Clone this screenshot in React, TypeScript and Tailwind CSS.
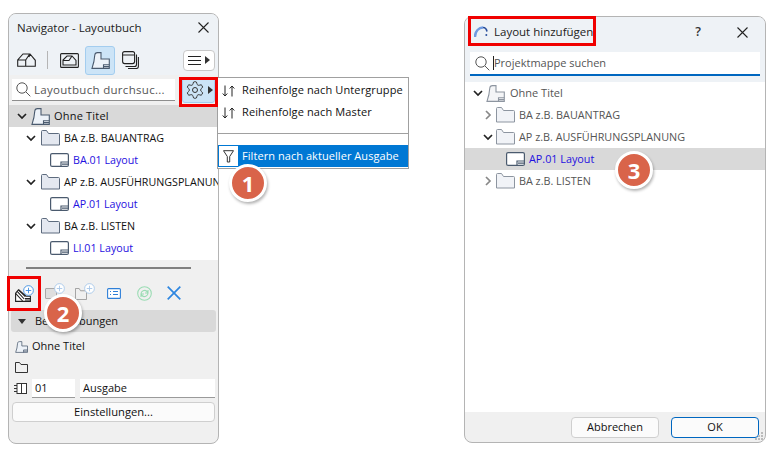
import React from "react";

const S = "#4a5a6e";

const Chevron = ({ open = true, color = "#222" }: { open?: boolean; color?: string }) => (
  <svg width="10" height="10" viewBox="0 0 10 10" fill="none" stroke={color} strokeWidth="1.7" className="shrink-0">
    {open ? <path d="M1 3l4 4 4-4" /> : <path d="M3 1l4 4-4 4" />}
  </svg>
);

const Folder = ({ light = false }: { light?: boolean }) => (
  <svg width="19" height="16" viewBox="0 0 19 16" fill={light ? "#f1f3f7" : "#e4e8f0"} stroke={light ? "#8d95a0" : "#5d6b7e"} strokeWidth="1" className="shrink-0">
    <path d="M.5 15V1.5a1 1 0 0 1 1-1h4l2 3h10a1 1 0 0 1 1 1V15z" />
  </svg>
);

const LayoutIcon = () => (
  <svg width="19" height="14" viewBox="0 0 19 14" fill="#fff" stroke={S} strokeWidth="1.2" className="shrink-0">
    <rect x=".6" y=".6" width="17.8" height="12.8" rx="1.5" />
    <path d="M11 13.4V9h7.4M12 11.2h6" fill="none" />
  </svg>
);

const BookIcon = ({ light = false, w = 19, h = 17 }: { light?: boolean; w?: number; h?: number }) => (
  <svg width={w} height={h} viewBox="0 0 19 17" fill="none" stroke={light ? "#8d95a0" : S} strokeWidth="1.1" className="shrink-0">
    <path d="M1 16.4C2.5 12 3.5 8 3.8 3 3.9 1.5 5 .6 6.5.6H10v6.4h8.3v9.4z" fill={light ? "#f4f5f7" : "#edf2f8"} />
    <path d="M12.5 16.4v-3.6h5.8M13 14.6h5" />
  </svg>
);

const House = () => (
  <svg width="19" height="14" viewBox="0 0 19 14" fill="none" stroke="#222" strokeWidth="1.1">
    <path d="M.7 13.3V7L6 1h7l5.3 6.3v6zM.7 7h8l4-6M8.7 7v6.3M13 1l-1 3" />
  </svg>
);

const HouseFrame = () => (
  <svg width="19" height="15" viewBox="0 0 19 15" fill="none" stroke="#222" strokeWidth="1.1">
    <rect x=".6" y=".6" width="17.8" height="13.8" rx="1" />
    <path d="M3 12V7l4-4h5l4 4.5V12zM3 7.5h6l3-4.5" />
  </svg>
);

const Stack = () => (
  <svg width="17" height="18" viewBox="0 0 17 18" fill="none" stroke="#222" strokeWidth="1.1">
    <rect x=".6" y=".6" width="12" height="12" rx="2" />
    <path d="M.6 4h12M14.5 3.5v10a2 2 0 0 1-2 2h-9M16.4 6v9.5a2 2 0 0 1-2 2H6" />
  </svg>
);

const Search = () => (
  <svg width="15" height="15" viewBox="0 0 15 15" fill="none" stroke="#555" strokeWidth="1" className="shrink-0">
    <circle cx="6" cy="6" r="5.2" />
    <path d="M10 10l4.3 4.3" />
  </svg>
);

const Close = () => (
  <svg width="11" height="11" viewBox="0 0 11 11" stroke="#222" strokeWidth="1.1">
    <path d="M.5.5l10 10M10.5.5l-10 10" />
  </svg>
);

const Gear = () => (
  <svg width="20" height="20" viewBox="0 0 24 24" fill="none" stroke="#333" strokeWidth="1.2" className="shrink-0">
    <path d="M12.22 2h-.44a2 2 0 0 0-2 2v.18a2 2 0 0 1-1 1.73l-.43.25a2 2 0 0 1-2 0l-.15-.08a2 2 0 0 0-2.73.73l-.22.38a2 2 0 0 0 .73 2.73l.15.1a2 2 0 0 1 1 1.72v.51a2 2 0 0 1-1 1.74l-.15.09a2 2 0 0 0-.73 2.73l.22.38a2 2 0 0 0 2.73.73l.15-.08a2 2 0 0 1 2 0l.43.25a2 2 0 0 1 1 1.73V20a2 2 0 0 0 2 2h.44a2 2 0 0 0 2-2v-.18a2 2 0 0 1 1-1.73l.43-.25a2 2 0 0 1 2 0l.15.08a2 2 0 0 0 2.73-.73l.22-.39a2 2 0 0 0-.73-2.73l-.15-.08a2 2 0 0 1-1-1.74v-.5a2 2 0 0 1 1-1.74l.15-.09a2 2 0 0 0 .73-2.73l-.22-.38a2 2 0 0 0-2.73-.73l-.15.08a2 2 0 0 1-2 0l-.43-.25a2 2 0 0 1-1-1.73V4a2 2 0 0 0-2-2z" />
    <circle cx="12" cy="12" r="3" />
  </svg>
);

const Tri = () => (
  <svg width="5" height="8" viewBox="0 0 5 8" fill="#333" className="shrink-0">
    <path d="M0 0l5 4-5 4z" />
  </svg>
);

const Sort = () => (
  <svg width="13" height="12" viewBox="0 0 13 12" fill="none" stroke="#222" strokeWidth="1" className="shrink-0">
    <path d="M3 .5v10.5M.7 8.5L3 11l2.3-2.5M10 11.5V1M7.7 3.5L10 1l2.3 2.5" />
  </svg>
);

const Plus = ({ color = "#3f8fe0", className }: { color?: string; className: string }) => (
  <svg width="11" height="11" viewBox="0 0 12 12" fill="#fff" stroke={color} strokeWidth="1" className={`absolute ${className}`}>
    <circle cx="6" cy="6" r="5.3" />
    <path d="M6 3v6M3 6h6" />
  </svg>
);

const Badge = ({ n, className }: { n: string; className: string }) => (
  <div className={`absolute z-30 flex h-[38px] w-[38px] items-center justify-center rounded-full border-[3px] border-white bg-[#d9644a] text-[22px] font-bold text-white shadow-[1px_2px_3px_rgba(0,0,0,0.3)] ${className}`}>
    {n}
  </div>
);

const RedBox = ({ className }: { className: string }) => (
  <div className={`pointer-events-none absolute z-20 border-[3px] border-[#f00000] ${className}`} />
);

const Row = ({ pl, children, className = "" }: { pl: number; children: React.ReactNode; className?: string }) => (
  <div className={`flex h-[22px] items-center overflow-hidden whitespace-nowrap ${className}`} style={{ paddingLeft: pl }}>
    {children}
  </div>
);

function Navigator() {
  return (
    <div className="relative h-[431px] w-[211px] shrink-0 overflow-hidden rounded-[8px] border border-[#b4b4b4] bg-[#f0f0f0]">
      <div className="bg-[#eef2f6]">
        <div className="flex h-[27px] items-center justify-between pl-[8px] pr-[9px]">
          <span className="text-[11.5px] leading-[20px] text-[#222]">Navigator - Layoutbuch</span>
          <Close />
        </div>
        <div className="flex h-[34px] items-center pl-[8px] pr-[3px] pt-[4px]">
          <House />
          <div className="ml-[11px] h-[18px] w-px bg-[#b5b5b5]" />
          <span className="ml-[12px] flex"><HouseFrame /></span>
          <div className="ml-[6px] flex h-[29px] w-[30px] items-center justify-center rounded-[3px] border border-[#a3cdef] bg-[#cce4f7]">
            <BookIcon />
          </div>
          <span className="ml-[7px] flex"><Stack /></span>
          <div className="ml-auto flex h-[21px] w-[32px] items-center justify-center gap-[4px] rounded-[4px] border border-[#c8c8c8] bg-white">
            <svg width="13" height="9" viewBox="0 0 13 9" stroke="#222" strokeWidth="1"><path d="M0 .5h13M0 4.5h13M0 8.5h13" /></svg>
            <Tri />
          </div>
        </div>
      </div>
      <div className="flex h-[30px] items-center bg-[#f0f0f0] pl-[3px] pr-[2px]">
        <div className="flex h-[22px] w-[163px] items-center gap-[3px] border-b border-[#8e8e8e] bg-white pl-[4px]">
          <Search />
          <span className="text-[11.5px] tracking-[0.3px] text-[#555]">Layoutbuch durchsuc...</span>
        </div>
        <div className="ml-[7px] flex h-[25px] w-[33px] items-center justify-center gap-[3px] rounded-[3px] border border-[#a3cdef] bg-[#cce4f7]">
          <Gear />
          <Tri />
        </div>
      </div>
      <Row pl={8} className="bg-[#d9d9d9] text-[11px] text-[#111]">
        <Chevron />
        <span className="ml-[4px] flex"><BookIcon /></span>
        <span className="ml-[4px] tracking-[0.2px]">Ohne Titel</span>
      </Row>
      <div className="h-[133px] overflow-hidden bg-white text-[10.7px] text-[#111]">
        {[
          ["BA z.B. BAUANTRAG", "BA.01 Layout"],
          ["AP z.B. AUSFÜHRUNGSPLANUN", "AP.01 Layout"],
          ["BA z.B. LISTEN", "LI.01 Layout"],
        ].map(([f, l]) => (
          <React.Fragment key={l}>
            <Row pl={17}>
              <Chevron />
              <span className="ml-[5px] flex"><Folder /></span>
              <span className="ml-[4px]">{f}</span>
            </Row>
            <Row pl={41}>
              <LayoutIcon />
              <span className="ml-[4px] text-[#1f10e0]">{l}</span>
            </Row>
          </React.Fragment>
        ))}
      </div>
      <div className="ml-[17px] mt-[7px] h-[2px] w-[165px] bg-[#808080]" />
      <div className="mt-[14px] flex h-[27px] items-start pl-[6px]">
        <div className="relative h-[19px] w-[18px]">
          <svg width="16" height="13" viewBox="0 0 16 13" fill="none" stroke="#222" strokeWidth="1.1" className="absolute bottom-0 left-0">
            <path d="M.6 12.4V4.2L3.5.8l7.5 6.4h4.4v5.2z" fill="#fff" />
            <path d="M.6 4.4l7 7.6M2.2 2.4l7 7.6M3.8 1l6.5 6.5M10 9.5h5.4M10 11h5.4" />
          </svg>
          <Plus className="left-[8px] top-[2px]" />
        </div>
        <div className="relative ml-[12px] h-[19px] w-[18px]">
          <div className="absolute bottom-[3px] left-0 h-[11px] w-[12px] rounded-[1px] border border-[#a8a8a8] bg-[#dedede]" />
          <Plus color="#a9c8ea" className="left-[9px] top-0" />
        </div>
        <div className="relative ml-[12px] h-[19px] w-[18px]">
          <svg width="12" height="12" viewBox="0 0 13 13" fill="#f0f0f0" stroke="#9a9a9a" strokeWidth="1" className="absolute bottom-[2px] left-0">
            <path d="M.5 12.5v-12h4l1.5 2.5h6.5v9.5z" />
          </svg>
          <Plus color="#a9c8ea" className="left-[9px] top-0" />
        </div>
        <div className="ml-[14px] mt-[5px] flex w-[14px]">
          <svg width="14" height="11" viewBox="0 0 14 11" fill="#fff" stroke="#2e7fd8" strokeWidth="1.1">
            <rect x=".6" y=".6" width="12.8" height="9.8" rx="1" />
            <path d="M3 3.5h1M6 3.5h5M3 6.5h1M6 6.5h5" />
          </svg>
        </div>
        <div className="ml-[16px] mt-[3px] flex w-[15px]">
          <svg width="15" height="15" viewBox="0 0 15 15" fill="none" stroke="#9bdcb4" strokeWidth="1.1">
            <circle cx="7.5" cy="7.5" r="6.8" />
            <path d="M4 8a3.5 3.5 0 0 1 6-2.5l1 1M11 7a3.5 3.5 0 0 1-6 2.5l-1-1M11 4v3H8M4 11V8h3" />
          </svg>
        </div>
        <div className="ml-[15px] mt-[3px] flex">
          <svg width="14" height="14" viewBox="0 0 14 14" stroke="#2e86e0" strokeWidth="1.7"><path d="M.7.7l12.6 12.6M13.3.7L.7 13.3" /></svg>
        </div>
      </div>
      <div className="mx-[2px] flex h-[22px] w-[205px] items-center rounded-[3px] bg-[#d9d9d9] pl-[7px] text-[11px] text-[#111]">
        <svg width="8" height="5" viewBox="0 0 8 5" fill="#333"><path d="M0 0h8L4 5z" /></svg>
        <span className="ml-[9px]">Beschreibungen</span>
      </div>
      <div className="flex h-[22px] items-end pl-[6px] text-[11px] text-[#111]">
        <BookIcon w={13} h={14} />
        <span className="ml-[4px] leading-[17px]">Ohne Titel</span>
      </div>
      <div className="flex h-[21px] items-end pb-[2px] pl-[6px]">
        <svg width="13" height="11" viewBox="0 0 13 11" fill="none" stroke="#333" strokeWidth="1">
          <path d="M.5 10.5v-10h4l1.5 2h6.5v8z" />
        </svg>
      </div>
      <div className="mt-[4px] flex h-[19px] items-center pl-[5px] text-[11px] text-[#111]">
        <svg width="13" height="11" viewBox="0 0 13 11" fill="#fff" stroke="#333" strokeWidth="1">
          <rect x="3" y=".5" width="9.5" height="10" />
          <path d="M7.5.5v10M0 2.5h3M0 5.5h3M0 8.5h3" />
        </svg>
        <div className="ml-[5px] flex h-[19px] w-[43px] items-center border-b border-[#9a9a9a] bg-white pl-[3px]">01</div>
        <div className="ml-[5px] flex h-[19px] w-[135px] items-center border-b border-[#9a9a9a] bg-white pl-[3px]">Ausgabe</div>
      </div>
      <div className="ml-[3px] mt-[4px] flex h-[20px] w-[203px] items-center justify-center rounded-[4px] border border-[#cfcfcf] bg-[#fbfbfb] text-[11.2px] text-[#111]">
        Einstellungen...
      </div>
    </div>
  );
}

function Dialog() {
  return (
    <div className="relative ml-[245px] mt-[3px] flex h-[427px] w-[302px] shrink-0 flex-col overflow-hidden rounded-[8px] border border-[#b4b4b4] bg-[#f0f0f0]">
      <div className="bg-[#eef2f6] pb-[6px]">
        <div className="mb-[5px] flex h-[30px] items-center pl-[9px] pr-[17px]">
          <svg width="14" height="12" viewBox="0 0 14 12" fill="none">
            <path d="M1 11C1 5 5 1.5 9 1.5" stroke="#6f9ae0" strokeWidth="2.4" />
            <path d="M9 1.5c2 0 3.5 1.5 4 4" stroke="#2a4f9c" strokeWidth="1.6" />
            <circle cx="12.3" cy="9" r="1" fill="#2a4f9c" />
          </svg>
          <span className="ml-[6px] text-[11.5px] text-[#222]">Layout hinzufügen</span>
          <span className="ml-auto text-[12.5px] font-semibold text-[#333]">?</span>
          <span className="ml-[36px] flex"><Close /></span>
        </div>
        <div className="ml-[5px] flex h-[24px] w-[290px] items-center border-b-2 border-[#0067c0] bg-white pl-[5px]">
          <Search />
          <span className="ml-[3px] h-[14px] w-px bg-[#222]" />
          <span className="text-[11px] tracking-[0px] text-[#555]">Projektmappe suchen</span>
        </div>
      </div>
      <div className="flex-1 bg-white text-[10.8px] text-[#555]">
        <Row pl={8}>
          <Chevron />
          <span className="ml-[3px] flex"><BookIcon light /></span>
          <span className="ml-[5px] text-[11px]">Ohne Titel</span>
        </Row>
        <Row pl={18}>
          <Chevron open={false} color="#888" />
          <span className="ml-[3px] flex"><Folder light /></span>
          <span className="ml-[4px]">BA z.B. BAUANTRAG</span>
        </Row>
        <Row pl={18}>
          <Chevron />
          <span className="ml-[3px] flex"><Folder light /></span>
          <span className="ml-[4px]">AP z.B. AUSFÜHRUNGSPLANUNG</span>
        </Row>
        <Row pl={41} className="bg-[#d9d9d9]">
          <LayoutIcon />
          <span className="ml-[4px] text-[#1f10e0]">AP.01 Layout</span>
        </Row>
        <Row pl={18}>
          <Chevron open={false} color="#888" />
          <span className="ml-[3px] flex"><Folder light /></span>
          <span className="ml-[4px]">BA z.B. LISTEN</span>
        </Row>
      </div>
      <div className="relative flex h-[30px] items-center gap-[12px] pl-[106px] text-[11px] text-[#111]">
        <div className="flex h-[21px] w-[88px] items-center justify-center rounded-[4px] border border-[#cfcfcf] bg-[#fbfbfb]">Abbrechen</div>
        <div className="flex h-[21px] w-[88px] items-center justify-center rounded-[4px] border border-[#0067c0] bg-[#fbfbfb]">OK</div>
        <svg width="8" height="8" viewBox="0 0 8 8" fill="#bbb" className="absolute bottom-[2px] right-[2px]">
          <rect x="6" y="0" width="2" height="2" /><rect x="3" y="3" width="2" height="2" /><rect x="6" y="3" width="2" height="2" />
          <rect x="0" y="6" width="2" height="2" /><rect x="3" y="6" width="2" height="2" /><rect x="6" y="6" width="2" height="2" />
        </svg>
      </div>
    </div>
  );
}

function Popup() {
  return (
    <div className="absolute left-[217px] top-[77px] z-10 h-[92px] w-[192px] border border-[#a0a0a0] bg-white text-[11px] text-[#111]">
      <div className="flex h-[24px] items-center pl-[4px] pt-[1px]"><Sort /><span className="ml-[7px] tracking-[0.12px]">Reihenfolge nach Untergruppe</span></div>
      <div className="flex h-[21px] items-center pl-[4px]"><Sort /><span className="ml-[7px] tracking-[0.12px]">Reihenfolge nach Master</span></div>
      <div className="mt-[10px] h-px bg-[#a0a0a0]" />
      <div className="mt-[11px] flex h-[22px] items-center bg-[#0078d4] text-white">
        <div className="flex h-[22px] w-[21px] items-center justify-center border border-[#0078d4] bg-white">
          <svg width="11" height="13" viewBox="0 0 11 13" fill="none" stroke="#333" strokeWidth="1"><path d="M.5.7h10L6.7 6.5V12H4.3V6.5z" /></svg>
        </div>
        <span className="ml-[3px] tracking-[0.06px]">Filtern nach aktueller Ausgabe</span>
      </div>
    </div>
  );
}

export default function App() {
  return (
    <div className="relative h-[454px] w-[770px] overflow-hidden bg-white" style={{ fontFamily: '"Open Sans", "Noto Sans", sans-serif' }}>
      <div className="flex pl-[8px] pt-[13px]">
        <Navigator />
        <Dialog />
      </div>
      <Popup />
      <RedBox className="left-[179px] top-[77px] h-[30px] w-[39px]" />
      <RedBox className="left-[7px] top-[276px] h-[35px] w-[34px]" />
      <RedBox className="left-[468px] top-[16px] h-[30px] w-[128px]" />
      <Badge n="1" className="left-[229px] top-[164px]" />
      <Badge n="2" className="left-[44px] top-[294px]" />
      <Badge n="3" className="left-[615px] top-[151px]" />
    </div>
  );
}
